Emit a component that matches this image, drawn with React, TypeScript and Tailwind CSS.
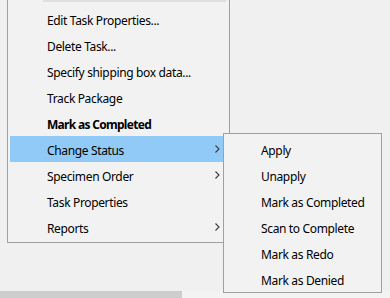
import React from "react";

type Item = { label: string; bold?: boolean; sub?: boolean; active?: boolean };

const mainItems: Item[] = [
  { label: "Edit Task Properties..." },
  { label: "Delete Task..." },
  { label: "Specify shipping box data..." },
  { label: "Track Package" },
  { label: "Mark as Completed", bold: true },
  { label: "Change Status", sub: true, active: true },
  { label: "Specimen Order", sub: true },
  { label: "Task Properties" },
  { label: "Reports", sub: true },
];

const subItems: Item[] = [
  { label: "Apply" },
  { label: "Unapply" },
  { label: "Mark as Completed" },
  { label: "Scan to Complete" },
  { label: "Mark as Redo" },
  { label: "Mark as Denied" },
];

function Chevron() {
  return (
    <svg width="5" height="8" viewBox="0 0 5 8" className="block">
      <path d="M0.5 0.5 L4 4 L0.5 7.5" fill="none" stroke="#3a3a3a" strokeWidth="1.1" />
    </svg>
  );
}

function Row({ item, textPad }: { item: Item; textPad: string }) {
  return (
    <div
      className={`flex h-[26px] items-center ${item.active ? "bg-[#91c9f7]" : ""}`}
    >
      <span
        className={`${textPad} flex-1 translate-y-[1.5px] whitespace-nowrap text-[12px] leading-none text-black ${
          item.bold ? "font-bold tracking-[-0.7px]" : "tracking-[-0.35px]"
        }`}
      >
        {item.label}
      </span>
      {item.sub && (
        <span className="mr-[7px] flex items-center">
          <Chevron />
        </span>
      )}
    </div>
  );
}

export default function App() {
  return (
    <div
      className="relative h-[298px] w-[390px] overflow-hidden bg-[#f0f0f0]"
      style={{ fontFamily: '"Segoe UI", "Noto Sans", "Open Sans", sans-serif' }}
    >
      {/* bottom scrollbar strip */}
      <div className="absolute bottom-0 left-0 right-0 flex h-[7px] bg-[#f3f3f3]">
        <div className="h-full w-[182px] bg-[#cdcdcd]" />
      </div>

      {/* main context menu */}
      <div className="absolute left-[7px] top-0 w-[223px] border-b border-l border-r border-[#a0a0a0] bg-[#f2f2f2]">
        <div className="ml-[35px] mr-[3px] h-[2px] bg-[#dedede]" />
        <div className="px-[2px] pb-[2px] pt-[4px]">
          {mainItems.map((it) => (
            <Row key={it.label} item={it} textPad="pl-[37px]" />
          ))}
        </div>
      </div>

      {/* submenu */}
      <div className="absolute left-[223px] top-[133px] w-[159px] border border-[#a0a0a0] bg-[#f2f2f2] pb-0 pt-[2px]">
        {subItems.map((it) => (
          <Row key={it.label} item={it} textPad="pl-[37px]" />
        ))}
      </div>
    </div>
  );
}
